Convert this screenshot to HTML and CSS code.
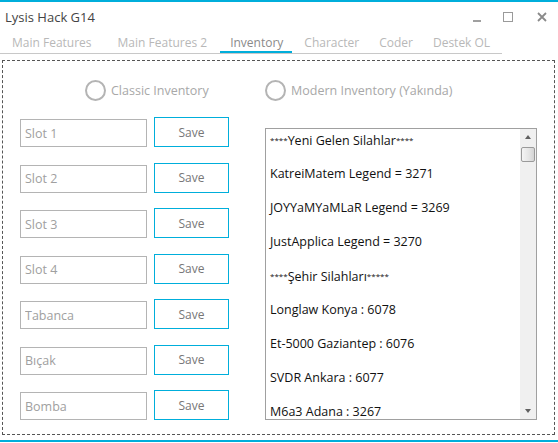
FILE: index.html
```html
<!DOCTYPE html>
<html lang="tr">
<head>
    <meta charset="UTF-8">
    <title>Lysis Hack G14</title>
    <link rel="stylesheet" href="styles.css">
</head>
<body>
<div class="window">

    <!-- Başlık çubuğu -->
    <div class="titlebar">
        <span class="title">Lysis Hack G14</span>
        <div class="controls">
            <span class="ctl ctl-min"></span>
            <span class="ctl ctl-max"></span>
            <svg class="ctl-close" width="10" height="10" viewBox="0 0 10 10">
                <path d="M1 1 L9 9 M9 1 L1 9" stroke="#8a8a8a" stroke-width="1.8"/>
            </svg>
        </div>
    </div>

    <!-- Sekmeler -->
    <div class="tabs">
        <span class="tab">Main Features</span>
        <span class="tab">Main Features 2</span>
        <span class="tab active">Inventory</span>
        <span class="tab">Character</span>
        <span class="tab">Coder</span>
        <span class="tab">Destek OL</span>
    </div>

    <div class="panel">
        <div class="radios">
            <label class="radio"><span class="circle"></span>Classic Inventory</label>
            <label class="radio"><span class="circle"></span>Modern Inventory (Yakında)</label>
        </div>

        <div class="body">
            <div class="slots">
                <div class="slot"><input class="slot-input" placeholder="Slot 1"><button class="save">Save</button></div>
                <div class="slot"><input class="slot-input" placeholder="Slot 2"><button class="save">Save</button></div>
                <div class="slot"><input class="slot-input" placeholder="Slot 3"><button class="save">Save</button></div>
                <div class="slot"><input class="slot-input" placeholder="Slot 4"><button class="save">Save</button></div>
                <div class="slot"><input class="slot-input" placeholder="Tabanca"><button class="save">Save</button></div>
                <div class="slot"><input class="slot-input" placeholder="Bıçak"><button class="save">Save</button></div>
                <div class="slot"><input class="slot-input" placeholder="Bomba"><button class="save">Save</button></div>
            </div>

            <!-- Silah listesi -->
            <div class="listbox">
                <div class="items">
                    <div class="item"><span class="stars">****</span>Yeni Gelen Silahlar<span class="stars">****</span></div>
                    <div class="item">KatreiMatem Legend = 3271</div>
                    <div class="item">JOYYaMYaMLaR Legend = 3269</div>
                    <div class="item">JustApplica Legend = 3270</div>
                    <div class="item"><span class="stars">****</span>Şehir Silahları<span class="stars">*****</span></div>
                    <div class="item">Longlaw Konya : 6078</div>
                    <div class="item">Et-5000 Gaziantep : 6076</div>
                    <div class="item">SVDR Ankara : 6077</div>
                    <div class="item">M6a3 Adana : 3267</div>
                </div>
                <div class="scrollbar">
                    <span class="arrow up"></span>
                    <span class="thumb"></span>
                    <span class="arrow down"></span>
                </div>
            </div>
        </div>
    </div>

    <div class="bottom-line"></div>
</div>
</body>
</html>
```

FILE: styles.css
```css
body {
    margin: 0;
    background-color: #fff;
    font-family: "Open Sans", Arial, sans-serif;
    font-size: 12px;
}

.window {
    width: 558px;
    height: 443px;
    border-top: 2px solid #00aedb;
    box-sizing: border-box;
    display: flex;
    flex-direction: column;
}

.titlebar {
    height: 33px;
    display: flex;
    align-items: flex-start;
    justify-content: space-between;
}

.title {
    font-size: 13px;
    color: #444;
    margin: 6px 0 0 5px;
}

.controls {
    display: flex;
    align-items: flex-start;
    margin-top: 10px;
    margin-right: 11px;
}

.ctl-min {
    width: 8px;
    height: 2px;
    background-color: #a0a0a0;
    margin-top: 8px;
}

.ctl-max {
    width: 8px;
    height: 8px;
    border: 1px solid #9a9a9a;
    margin-left: 22px;
}

.ctl-close {
    margin-left: 24px;
}

.tabs {
    display: flex;
    width: 502px;
    border-bottom: 1px solid #c8c8c8;
    height: 19px;
    padding-left: 2px;
    box-sizing: border-box;
    white-space: nowrap;
}

.tab {
    flex-shrink: 0;
    color: #b8b8b8;
    font-size: 12px;
    line-height: 16px;
    padding: 0 10px;
}

.tab:first-child {
    margin-right: 6px;
}

.tab.active {
    color: #8a8a8a;
    border-bottom: 2px solid #00aedb;
    padding: 0 9px 0 10px;
    margin: 0 2px 0 3px;
}

.panel {
    margin: 6px 3px 0 2px;
    height: 375px;
    border: 1px dashed #555;
    box-sizing: border-box;
}

.radios {
    display: flex;
    padding: 18px 0 0 82px;
    height: 22px;
}

.radio {
    display: flex;
    align-items: center;
    flex-shrink: 0;
    white-space: nowrap;
    color: #a8a8a8;
    font-size: 12.5px;
    width: 180px;
}

.circle {
    flex-shrink: 0;
    width: 17px;
    height: 17px;
    border: 2px solid #b4b4b4;
    border-radius: 50%;
    margin-right: 5px;
}

.body {
    display: flex;
    padding: 16px 0 0 17px;
}

.slots {
    display: flex;
    flex-direction: column;
    gap: 15.5px;
    width: 245px;
}

.slot {
    display: flex;
    align-items: center;
    height: 30px;
}

.slot-input {
    width: 127px;
    height: 28px;
    box-sizing: border-box;
    border: 1px solid #b4b4b4;
    padding: 0 4px;
    margin-top: 2px;
    font-family: "Open Sans", Arial, sans-serif;
    font-size: 12.5px;
    outline: none;
}

.slot-input::placeholder {
    color: #a0a0a0;
}

.save {
    width: 75px;
    height: 30px;
    margin-left: 7px;
    background-color: #fff;
    border: 1px solid #00aedb;
    color: #777;
    font-family: "Open Sans", Arial, sans-serif;
    font-size: 12px;
    padding: 0;
}

.listbox {
    display: flex;
    width: 272px;
    height: 292px;
    margin-top: 11px;
    border: 1px solid #a0a0a0;
    box-sizing: border-box;
    overflow: hidden;
}

.items {
    flex: 1;
    padding: 3px 0 0 4px;
}

.item {
    height: 34px;
    line-height: 16px;
    font-size: 12.5px;
    color: #111;
    white-space: nowrap;
}

.stars {
    font-size: 8px;
    vertical-align: 2px;
}

.scrollbar {
    width: 16px;
    background-color: #f0f0f0;
    display: flex;
    flex-direction: column;
    align-items: center;
}

.arrow {
    width: 0;
    height: 0;
    border-left: 3px solid transparent;
    border-right: 3px solid transparent;
}

.arrow.up {
    border-bottom: 4px solid #606060;
    margin-top: 6px;
}

.arrow.down {
    border-top: 4px solid #606060;
    margin-top: auto;
    margin-bottom: 6px;
}

.thumb {
    width: 14px;
    height: 15px;
    margin-top: 8px;
    box-sizing: border-box;
    border: 1px solid #9a9a9a;
    border-radius: 2px;
    background: linear-gradient(to right, #f4f4f4, #e4e4e4 60%, #d4d4d4);
}

.bottom-line {
    margin-top: 5px;
    height: 2px;
    background-color: #00aedb;
}
```
